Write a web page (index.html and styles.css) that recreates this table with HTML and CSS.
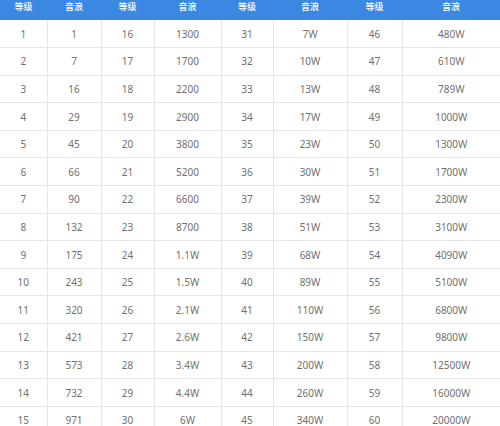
FILE: index.html
```html
<!DOCTYPE html>
<html lang="zh">
<head>
<meta charset="utf-8">
<link rel="stylesheet" href="styles.css">
</head>
<body>
<table class="lv">
<colgroup>
<col class="c1"><col class="c2"><col class="c3"><col class="c4"><col class="c5"><col class="c6"><col class="c7"><col class="c8">
</colgroup>
<thead>
<tr><th>等级</th><th>音浪</th><th>等级</th><th>音浪</th><th>等级</th><th>音浪</th><th>等级</th><th>音浪</th></tr>
</thead>
<tbody>
<tr><td>1</td><td>1</td><td>16</td><td>1300</td><td>31</td><td>7W</td><td>46</td><td>480W</td></tr>
<tr><td>2</td><td>7</td><td>17</td><td>1700</td><td>32</td><td>10W</td><td>47</td><td>610W</td></tr>
<tr><td>3</td><td>16</td><td>18</td><td>2200</td><td>33</td><td>13W</td><td>48</td><td>789W</td></tr>
<tr><td>4</td><td>29</td><td>19</td><td>2900</td><td>34</td><td>17W</td><td>49</td><td>1000W</td></tr>
<tr><td>5</td><td>45</td><td>20</td><td>3800</td><td>35</td><td>23W</td><td>50</td><td>1300W</td></tr>
<tr><td>6</td><td>66</td><td>21</td><td>5200</td><td>36</td><td>30W</td><td>51</td><td>1700W</td></tr>
<tr><td>7</td><td>90</td><td>22</td><td>6600</td><td>37</td><td>39W</td><td>52</td><td>2300W</td></tr>
<tr><td>8</td><td>132</td><td>23</td><td>8700</td><td>38</td><td>51W</td><td>53</td><td>3100W</td></tr>
<tr><td>9</td><td>175</td><td>24</td><td>1.1W</td><td>39</td><td>68W</td><td>54</td><td>4090W</td></tr>
<tr><td>10</td><td>243</td><td>25</td><td>1.5W</td><td>40</td><td>89W</td><td>55</td><td>5100W</td></tr>
<tr><td>11</td><td>320</td><td>26</td><td>2.1W</td><td>41</td><td>110W</td><td>56</td><td>6800W</td></tr>
<tr><td>12</td><td>421</td><td>27</td><td>2.6W</td><td>42</td><td>150W</td><td>57</td><td>9800W</td></tr>
<tr><td>13</td><td>573</td><td>28</td><td>3.4W</td><td>43</td><td>200W</td><td>58</td><td>12500W</td></tr>
<tr><td>14</td><td>732</td><td>29</td><td>4.4W</td><td>44</td><td>260W</td><td>59</td><td>16000W</td></tr>
<tr><td>15</td><td>971</td><td>30</td><td>6W</td><td>45</td><td>340W</td><td>60</td><td>20000W</td></tr>
</tbody>
</table>
</body>
</html>
```

FILE: styles.css
```css
html, body {
  margin: 0;
  padding: 0;
  background: #ffffff;
  overflow: hidden;
}

.lv {
  width: 500px;
  table-layout: fixed;
  border-collapse: collapse;
  font-family: "Noto Sans", "Noto Sans CJK SC", sans-serif;
  font-size: 10px;
  color: #707070;
  text-align: center;
}

.c1 { width: 47px; }
.c2 { width: 54px; }
.c3 { width: 53px; }
.c4 { width: 67px; }
.c5 { width: 52px; }
.c6 { width: 74px; }
.c7 { width: 55px; }
.c8 { width: 98px; }

.lv th {
  height: 20px;
  padding: 0 0 6px 0;
  background: #3a88e2;
  color: #ffffff;
  font-family: "Noto Sans CJK SC", sans-serif;
  font-size: 9px;
  font-weight: 500;
  line-height: 14px;
  box-sizing: border-box;
  border: none;
}

.lv td {
  height: 27.6px;
  padding: 0;
  line-height: 12px;
  border: 1px solid #e6e6e6;
  box-sizing: border-box;
}

.lv td:first-child { border-left: none; }
.lv td:last-child { border-right: none; }
.lv tbody tr:first-child td { border-top: none; }
```
